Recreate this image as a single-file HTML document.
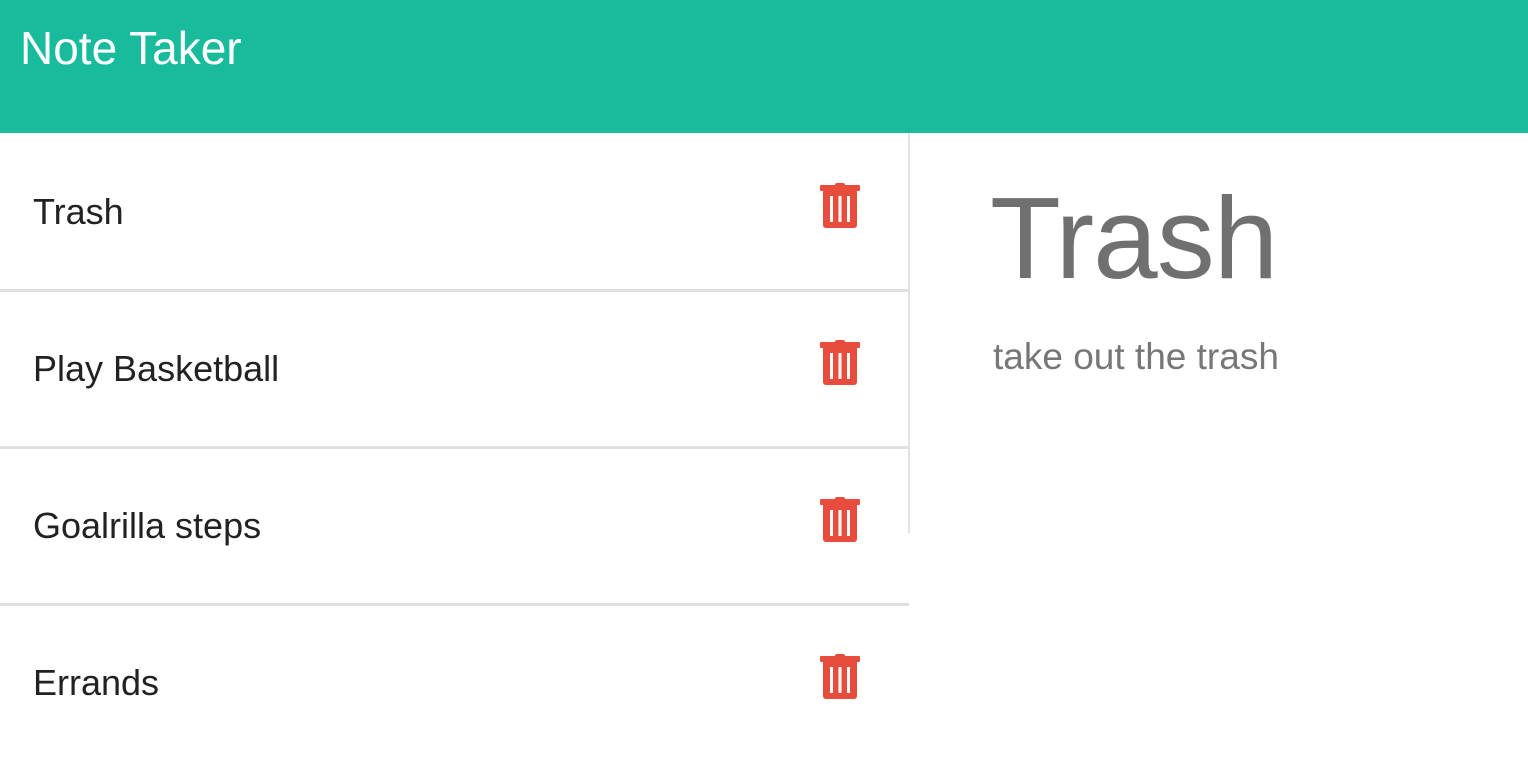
<!DOCTYPE html>
<html><head><style>
*{margin:0;padding:0;box-sizing:border-box}
body{width:1528px;height:762px;overflow:hidden;background:#fff;font-family:"Liberation Sans",sans-serif;position:relative}
.hdr{position:absolute;left:0;top:0;width:1528px;height:133px;background:#18bc9c}
.hdr span{position:absolute;left:20px;top:21px;font-size:46px;color:#fff}
.vline{position:absolute;left:908px;top:133px;width:2px;height:400px;background:#e2e2e2}
.row{position:absolute;left:0;width:909px;height:157px}
.row span{position:absolute;left:33px;top:58px;font-size:36px;color:#222}
.row svg{position:absolute;left:820px;top:50px}
.sep{position:absolute;left:0;width:909px;height:3px;background:#e0e0e0}
.t{position:absolute;left:990px;top:171px;font-size:116px;color:#707070;letter-spacing:-1px}
.b{position:absolute;left:993px;top:336px;font-size:37px;color:#777}
</style></head><body>
<div class="hdr"><span>Note Taker</span></div>
<div class="vline"></div>
<div class="row" style="top:133px"><span>Trash</span><svg width="40" height="46" viewBox="0 0 40 46"><rect x="15" y="0" width="10" height="4" rx="2" fill="#e74c3c"/><rect x="0" y="2" width="40" height="6" rx="1" fill="#e74c3c"/><path d="M3 8h34v34a3 3 0 0 1-3 3H6a3 3 0 0 1-3-3z" fill="#e74c3c"/><rect x="10" y="13" width="3" height="26" fill="#fff"/><rect x="18.5" y="13" width="3" height="26" fill="#fff"/><rect x="27" y="13" width="3" height="26" fill="#fff"/></svg></div>
<div class="sep" style="top:289px"></div>
<div class="row" style="top:290px"><span>Play Basketball</span><svg width="40" height="46" viewBox="0 0 40 46"><rect x="15" y="0" width="10" height="4" rx="2" fill="#e74c3c"/><rect x="0" y="2" width="40" height="6" rx="1" fill="#e74c3c"/><path d="M3 8h34v34a3 3 0 0 1-3 3H6a3 3 0 0 1-3-3z" fill="#e74c3c"/><rect x="10" y="13" width="3" height="26" fill="#fff"/><rect x="18.5" y="13" width="3" height="26" fill="#fff"/><rect x="27" y="13" width="3" height="26" fill="#fff"/></svg></div>
<div class="sep" style="top:446px"></div>
<div class="row" style="top:447px"><span>Goalrilla steps</span><svg width="40" height="46" viewBox="0 0 40 46"><rect x="15" y="0" width="10" height="4" rx="2" fill="#e74c3c"/><rect x="0" y="2" width="40" height="6" rx="1" fill="#e74c3c"/><path d="M3 8h34v34a3 3 0 0 1-3 3H6a3 3 0 0 1-3-3z" fill="#e74c3c"/><rect x="10" y="13" width="3" height="26" fill="#fff"/><rect x="18.5" y="13" width="3" height="26" fill="#fff"/><rect x="27" y="13" width="3" height="26" fill="#fff"/></svg></div>
<div class="sep" style="top:603px"></div>
<div class="row" style="top:604px"><span>Errands</span><svg width="40" height="46" viewBox="0 0 40 46"><rect x="15" y="0" width="10" height="4" rx="2" fill="#e74c3c"/><rect x="0" y="2" width="40" height="6" rx="1" fill="#e74c3c"/><path d="M3 8h34v34a3 3 0 0 1-3 3H6a3 3 0 0 1-3-3z" fill="#e74c3c"/><rect x="10" y="13" width="3" height="26" fill="#fff"/><rect x="18.5" y="13" width="3" height="26" fill="#fff"/><rect x="27" y="13" width="3" height="26" fill="#fff"/></svg></div>
<div class="t">Trash</div>
<div class="b">take out the trash</div>
</body></html>
